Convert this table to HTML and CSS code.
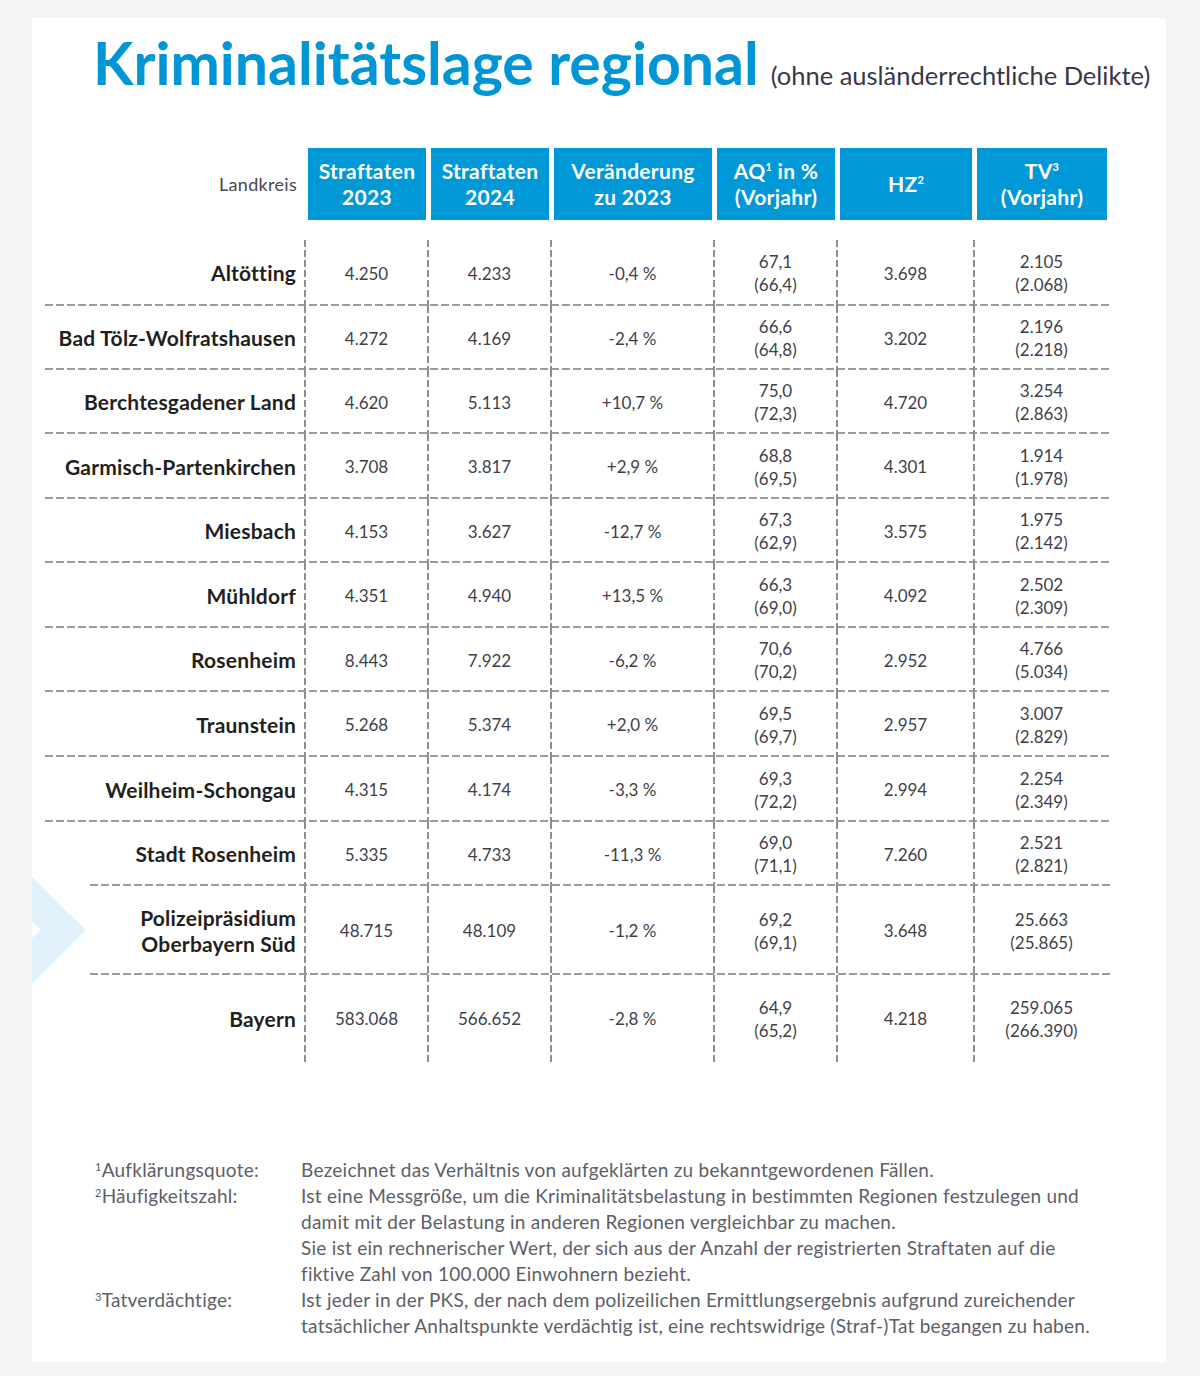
FILE: index.html
```html
<!DOCTYPE html>
<html lang="de">
<head>
<meta charset="utf-8">
<title>Kriminalitätslage regional</title>
<link rel="stylesheet" href="styles.css">
</head>
<body>
<div class="panel">
  <svg class="chevron" width="54" height="108" viewBox="0 0 54 108"><polygon points="0,0 54,53 0,107 0,61 9,53 0,45" fill="#e2f2fc"/></svg>
  <h1 class="title"><span class="main">Kriminalitätslage regional</span><span class="sub">(ohne ausländerrechtliche Delikte)</span></h1>

  <div class="table">
    <div class="head">
      <div class="hlabel">Landkreis</div>
      <div class="hcell"><span>Straftaten<br>2023</span></div>
      <div class="hcell"><span>Straftaten<br>2024</span></div>
      <div class="hcell"><span>Veränderung<br>zu 2023</span></div>
      <div class="hcell"><span>AQ<sup>1</sup> in %<br>(Vorjahr)</span></div>
      <div class="hcell"><span>HZ<sup>2</sup></span></div>
      <div class="hcell"><span>TV<sup>3</sup><br>(Vorjahr)</span></div>
    </div>

    <div class="row r1">
      <div class="label">Altötting</div>
      <div class="cell">4.250</div><div class="cell">4.233</div><div class="cell">-0,4 %</div>
      <div class="cell">67,1<br>(66,4)</div><div class="cell">3.698</div><div class="cell last">2.105<br>(2.068)</div>
    </div>
    <div class="row h64">
      <div class="label">Bad Tölz-Wolfratshausen</div>
      <div class="cell">4.272</div><div class="cell">4.169</div><div class="cell">-2,4 %</div>
      <div class="cell">66,6<br>(64,8)</div><div class="cell">3.202</div><div class="cell last">2.196<br>(2.218)</div>
    </div>
    <div class="row h64">
      <div class="label">Berchtesgadener Land</div>
      <div class="cell">4.620</div><div class="cell">5.113</div><div class="cell">+10,7 %</div>
      <div class="cell">75,0<br>(72,3)</div><div class="cell">4.720</div><div class="cell last">3.254<br>(2.863)</div>
    </div>
    <div class="row h65">
      <div class="label">Garmisch-Partenkirchen</div>
      <div class="cell">3.708</div><div class="cell">3.817</div><div class="cell">+2,9 %</div>
      <div class="cell">68,8<br>(69,5)</div><div class="cell">4.301</div><div class="cell last">1.914<br>(1.978)</div>
    </div>
    <div class="row h64">
      <div class="label">Miesbach</div>
      <div class="cell">4.153</div><div class="cell">3.627</div><div class="cell">-12,7 %</div>
      <div class="cell">67,3<br>(62,9)</div><div class="cell">3.575</div><div class="cell last">1.975<br>(2.142)</div>
    </div>
    <div class="row h65">
      <div class="label">Mühldorf</div>
      <div class="cell">4.351</div><div class="cell">4.940</div><div class="cell">+13,5 %</div>
      <div class="cell">66,3<br>(69,0)</div><div class="cell">4.092</div><div class="cell last">2.502<br>(2.309)</div>
    </div>
    <div class="row h64">
      <div class="label">Rosenheim</div>
      <div class="cell">8.443</div><div class="cell">7.922</div><div class="cell">-6,2 %</div>
      <div class="cell">70,6<br>(70,2)</div><div class="cell">2.952</div><div class="cell last">4.766<br>(5.034)</div>
    </div>
    <div class="row h65">
      <div class="label">Traunstein</div>
      <div class="cell">5.268</div><div class="cell">5.374</div><div class="cell">+2,0 %</div>
      <div class="cell">69,5<br>(69,7)</div><div class="cell">2.957</div><div class="cell last">3.007<br>(2.829)</div>
    </div>
    <div class="row h65">
      <div class="label">Weilheim-Schongau</div>
      <div class="cell">4.315</div><div class="cell">4.174</div><div class="cell">-3,3 %</div>
      <div class="cell">69,3<br>(72,2)</div><div class="cell">2.994</div><div class="cell last">2.254<br>(2.349)</div>
    </div>
    <div class="row h64 short">
      <div class="label">Stadt Rosenheim</div>
      <div class="cell">5.335</div><div class="cell">4.733</div><div class="cell">-11,3 %</div>
      <div class="cell">69,0<br>(71,1)</div><div class="cell">7.260</div><div class="cell last">2.521<br>(2.821)</div>
    </div>
    <div class="row hpp short">
      <div class="label">Polizeipräsidium<br>Oberbayern Süd</div>
      <div class="cell">48.715</div><div class="cell">48.109</div><div class="cell">-1,2 %</div>
      <div class="cell">69,2<br>(69,1)</div><div class="cell">3.648</div><div class="cell last">25.663<br>(25.865)</div>
    </div>
    <div class="row hby noline">
      <div class="label">Bayern</div>
      <div class="cell">583.068</div><div class="cell">566.652</div><div class="cell">-2,8 %</div>
      <div class="cell">64,9<br>(65,2)</div><div class="cell">4.218</div><div class="cell last">259.065<br>(266.390)</div>
    </div>
  </div>

  <div class="notes">
    <div class="nlabel"><sup>1</sup>Aufklärungsquote:</div>
    <div class="ntext">Bezeichnet das Verhältnis von aufgeklärten zu bekanntgewordenen Fällen.</div>
    <div class="nlabel"><sup>2</sup>Häufigkeitszahl:</div>
    <div class="ntext">Ist eine Messgröße, um die Kriminalitätsbelastung in bestimmten Regionen festzulegen und<br>damit mit der Belastung in anderen Regionen vergleichbar zu machen.<br>Sie ist ein rechnerischer Wert, der sich aus der Anzahl der registrierten Straftaten auf die<br>fiktive Zahl von 100.000 Einwohnern bezieht.</div>
    <div class="nlabel"><sup>3</sup>Tatverdächtige:</div>
    <div class="ntext">Ist jeder in der PKS, der nach dem polizeilichen Ermittlungsergebnis aufgrund zureichender<br>tatsächlicher Anhaltspunkte verdächtig ist, eine rechtswidrige (Straf-)Tat begangen zu haben.</div>
  </div>
</div>
</body>
</html>
```

FILE: styles.css
```css
html, body {
  margin: 0;
  padding: 0;
}
body {
  background: #f4f4f4;
  font-family: Lato, "Open Sans", sans-serif;
  width: 1200px;
  height: 1376px;
  overflow: hidden;
}
.panel {
  position: relative;
  margin: 18px 0 0 32px;
  width: 1134px;
  height: 1344px;
  background: #fff;
  padding-top: 10px;
  box-sizing: border-box;
}
.chevron {
  position: absolute;
  left: 0;
  top: 859px;
  display: block;
}
.title {
  margin: 0 0 0 61px;
  font-weight: 400;
  line-height: 70px;
  height: 70px;
  white-space: nowrap;
}
.title .main {
  font-size: 59px;
  font-weight: 700;
  color: #0096d6;
}
.title .sub {
  font-size: 25.5px;
  color: #3a3646;
  margin-left: 12px;
}

.table {
  margin: 50px 0 0 13px;
  width: 1065px;
}
.head, .row {
  display: grid;
  grid-template-columns: 261px 123px 123px 163px 123px 137px 135px;
}
.head {
  height: 72px;
  margin-bottom: 20px;
}
.hlabel {
  align-self: center;
  text-align: right;
  padding-right: 9px;
  font-size: 18px;
  letter-spacing: 0.3px;
  color: #4a4650;
}
.hcell {
  margin: 0 3px 0 2px;
  background: #0098d6;
  color: #fff;
  font-weight: 700;
  font-size: 21px;
  letter-spacing: 0.3px;
  line-height: 26px;
  text-align: center;
  display: flex;
  align-items: center;
  justify-content: center;
}
.hcell sup {
  font-size: 11px;
  line-height: 0;
  vertical-align: 8px;
}

.row {
  height: 64px;
  background-image: repeating-linear-gradient(to right, #9b9b9b 0 8px, transparent 8px 11px);
  background-size: 100% 2px;
  background-position: left bottom;
  background-repeat: no-repeat;
}
.row.r1 { height: 66px; }
.row.h64 { height: 64px; }
.row.h65 { height: 65px; }
.row.hpp { height: 89px; }
.row.hby { height: 87px; }
.row.short {
  background-size: calc(100% - 45px) 2px;
  background-position: right bottom;
}
.row.noline { background-image: none; }

.label, .cell {
  display: flex;
  align-items: center;
  background-image: repeating-linear-gradient(to bottom, #8e8e8e 0 7px, transparent 7px 10px);
  background-size: 2px 100%;
  background-position: right top;
  background-repeat: no-repeat;
}
.cell.last { background-image: none; }
.label {
  justify-content: flex-end;
  text-align: right;
  padding-right: 10px;
  font-weight: 700;
  font-size: 21px;
  letter-spacing: 0.2px;
  line-height: 26px;
  color: #231f20;
}
.cell {
  justify-content: center;
  text-align: center;
  font-size: 17px;
  line-height: 23px;
  color: #3f3f47;
  padding-right: 2px;
}

.notes {
  margin: 95px 0 0 63px;
  display: grid;
  grid-template-columns: 206px 1fr;
  font-size: 19px;
  letter-spacing: 0.25px;
  line-height: 26px;
  color: #5e5e68;
}
.nlabel sup {
  font-size: 11px;
  line-height: 0;
  vertical-align: 6px;
}
```
